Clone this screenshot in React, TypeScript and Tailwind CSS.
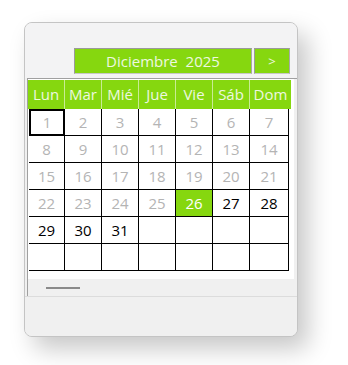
import React from "react";

const days = ["Lun", "Mar", "Mié", "Jue", "Vie", "Sáb", "Dom"];

type Cell = { n?: number; muted?: boolean; sel?: boolean; box?: boolean };

function buildCells(): Cell[] {
  const cells: Cell[] = [];
  for (let i = 1; i <= 31; i++) {
    cells.push({ n: i, muted: i <= 25, sel: i === 26, box: i === 1 });
  }
  while (cells.length < 42) cells.push({});
  return cells;
}

export default function App() {
  const cells = buildCells();
  return (
    <div className="w-[348px] h-[365px] bg-white overflow-hidden pt-[22px] pl-[24px]" style={{ fontFamily: '"Open Sans", "Noto Sans", sans-serif' }}>
      <div className="w-[274px] h-[315px] rounded-[8px] border border-[#c4c4c4] bg-[#f0f0f0] shadow-[10px_12px_24px_rgba(0,0,0,0.22)] overflow-hidden flex flex-col">
        <div className="bg-[#f3f3f4] flex flex-col">
          {/* top area */}
          <div className="h-[25px]" />
          {/* month header */}
          <div className="flex justify-end gap-[2px] pr-[7px] h-[26px]">
            <div className="w-[178px] h-[26px] bg-[#86d70f] border border-t-[#9a9a9a] border-l-[#9a9a9a] border-r-[#a8a8a8] border-b-[#c8c8c8] flex items-center justify-center text-[#eef8e0] text-[15px] whitespace-pre leading-none">
              Diciembre  2025
            </div>
            <div className="w-[36px] h-[26px] bg-[#86d70f] border border-t-[#9a9a9a] border-l-[#9a9a9a] border-r-[#a8a8a8] border-b-[#c8c8c8] flex items-center justify-center text-[#eef8e0] text-[13px] leading-none">
              &gt;
            </div>
          </div>
          <div className="h-[4px]" />
        </div>
        {/* calendar frame */}
        <div className="ml-[2px] border-l border-t border-[#a0a0a0] flex flex-col">
          <div className="bg-white w-[266px] pt-[1px] pb-[8px]">
            <div className="flex bg-[#86d70f] h-[29px] w-[263px]">
              {days.map((d, i) => (
                <div
                  key={d}
                  className={`${i === 6 ? "w-[41px]" : "w-[37px] border-r border-[#c9ec94]"} flex items-center justify-center text-[15px] text-[#eef8e0] leading-none`}
                >
                  {d}
                </div>
              ))}
            </div>
            <div className="grid grid-cols-[37px_37px_37px_37px_37px_37px_39px] w-[262px]">
              {cells.map((c, i) => (
                <div key={i} className={`h-[27px] ${i % 7 === 0 ? "pl-[1px]" : ""}`}>
                  <div
                    className={`h-full w-full flex items-center justify-center text-[15px] leading-none ${
                      c.box
                        ? "border-2 border-black"
                        : "border-r border-b border-black"
                    } ${c.sel ? "bg-[#86d70f] text-white" : c.muted ? "text-[#b4b4b4]" : "text-black"}`}
                  >
                    {c.n ?? ""}
                  </div>
                </div>
              ))}
            </div>
          </div>
          <div className="h-[17px] flex items-center pl-[18px]">
            <div className="w-[34px] h-[2px] bg-[#8a8a8a]" />
          </div>
        </div>
        <div className="border-t border-[#dcdcdc] flex-1 bg-[#f0f0f0]" />
      </div>
    </div>
  );
}
